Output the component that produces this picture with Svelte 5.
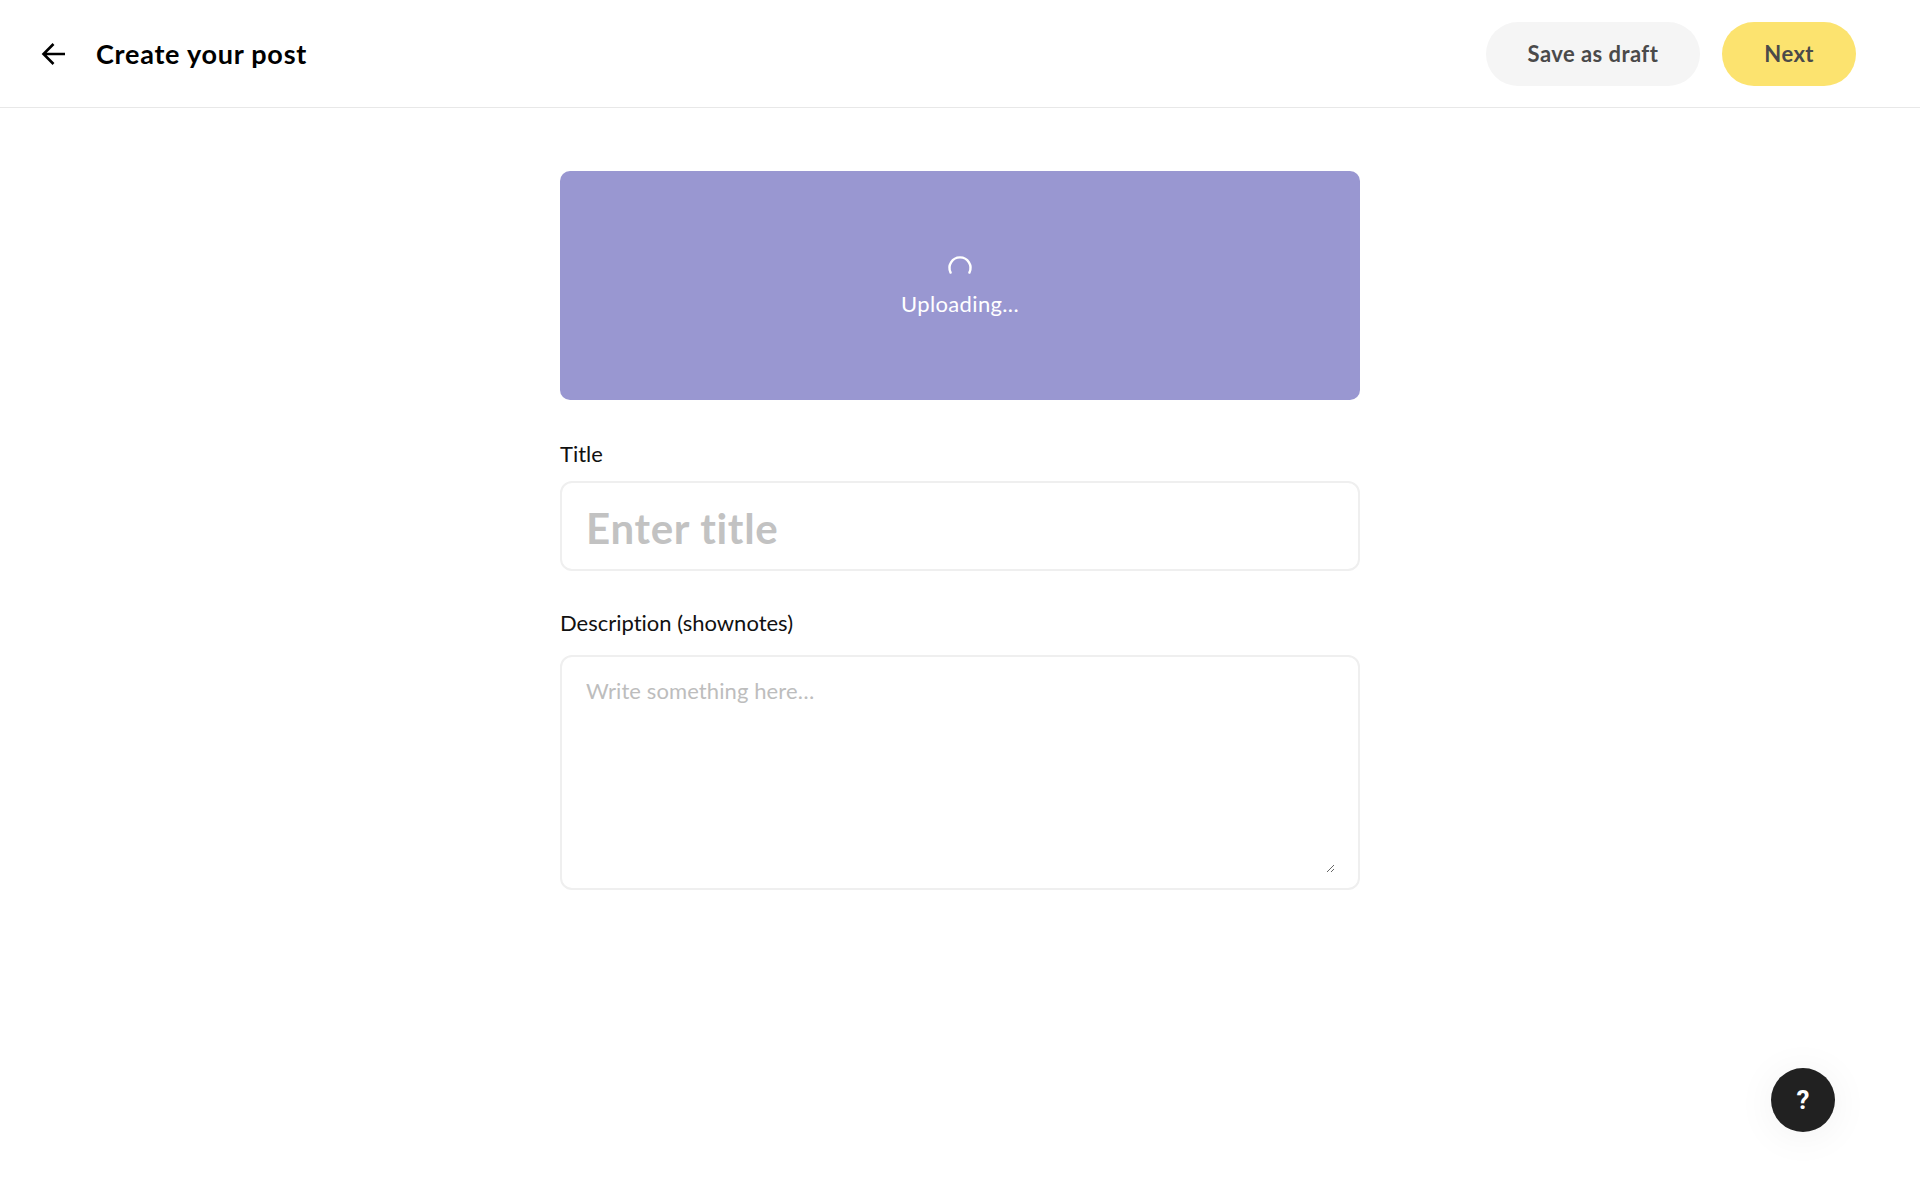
<script>
  let title = $state("");
  let description = $state("");
</script>

<div class="page">
  <header class="topbar">
    <div class="topbar-left">
      <button class="back" aria-label="Back">
        <svg width="28" height="28" viewBox="0 0 28 28" fill="none" stroke="#000" stroke-width="2.6">
          <path d="M25 14H4M13.5 4L3.5 14l10 10" />
        </svg>
      </button>
      <h1>Create your post</h1>
    </div>
    <div class="actions">
      <button class="pill draft">Save as draft</button>
      <button class="pill next">Next</button>
    </div>
  </header>

  <main class="form">
    <div class="upload">
      <svg width="28" height="28" viewBox="0 0 28 28" fill="none" stroke="#fff" stroke-width="2.4" stroke-linecap="round">
        <path d="M4.6 18.6A10.5 10.5 0 1 1 23.4 18.6" />
      </svg>
      <span>Uploading...</span>
    </div>

    <label class="field-label" for="title">Title</label>
    <input id="title" class="title-input" placeholder="Enter title" bind:value={title} />

    <label class="field-label desc-label" for="desc">Description (shownotes)</label>
    <div class="desc-box">
      <textarea id="desc" placeholder="Write something here…" bind:value={description}></textarea>
    </div>
  </main>

  <button class="help" aria-label="Help">?</button>
</div>

<style>
  :global(body) {
    margin: 0;
    background: #fff;
    font-family: Lato, "Open Sans", sans-serif;
    font-variant-ligatures: none;
  }
  .page {
    height: 1200px;
    position: relative;
    overflow: hidden;
  }
  .topbar {
    height: 107px;
    border-bottom: 1px solid #e8e8e8;
    display: flex;
    align-items: center;
    justify-content: space-between;
    padding: 0 64px 0 40px;
  }
  .topbar-left {
    display: flex;
    align-items: center;
    gap: 28px;
  }
  .back {
    border: none;
    background: none;
    padding: 0;
    display: flex;
  }
  h1 {
    margin: 0;
    font-size: 27px;
    font-weight: 700;
    letter-spacing: 0.75px;
    color: #000;
  }
  .actions {
    display: flex;
    gap: 22px;
  }
  .pill {
    height: 64px;
    border: none;
    border-radius: 32px;
    padding: 0 42px;
    font-family: inherit;
    font-size: 22px;
    font-weight: 700;
    letter-spacing: 0.45px;
    color: #4a4a4a;
  }
  .draft {
    background: #f5f5f5;
  }
  .next {
    background: #fce36f;
  }
  .form {
    width: 800px;
    margin: 63px auto 0;
    display: flex;
    flex-direction: column;
  }
  .upload {
    height: 229px;
    background: #9997d1;
    border-radius: 10px;
    display: flex;
    flex-direction: column;
    align-items: center;
    justify-content: center;
    gap: 8px;
    color: #fff;
    font-size: 22px;
    letter-spacing: 0.35px;
    box-sizing: border-box;
  }
  .field-label {
    font-size: 22px;
    color: #111;
    line-height: 28px;
    margin: 40px 0 13px;
    font-feature-settings: "liga" 0;
  }
  .desc-label {
    margin: 38px 0 18px;
  }
  .title-input {
    height: 90px;
    box-sizing: border-box;
    border: 2px solid #efefef;
    border-radius: 12px;
    padding: 4px 24px 0;
    font-family: inherit;
    font-size: 42px;
    font-weight: 700;
    letter-spacing: 0.7px;
    outline: none;
  }
  .title-input::placeholder {
    color: #c2c2c2;
  }
  .desc-box {
    height: 235px;
    box-sizing: border-box;
    border: 2px solid #efefef;
    border-radius: 12px;
    padding: 20px 23px 15px 24px;
    display: flex;
  }
  textarea {
    flex: 1;
    border: none;
    outline: none;
    padding: 0;
    resize: vertical;
    font-family: inherit;
    font-size: 22px;
    letter-spacing: 0.1px;
  }
  textarea::placeholder {
    color: #bdbdbd;
  }
  .help {
    position: absolute;
    left: 1771px;
    top: 1068px;
    width: 64px;
    height: 64px;
    border: none;
    border-radius: 50%;
    background: #212121;
    color: #fff;
    font-family: Roboto, sans-serif;
    font-size: 26px;
    font-weight: 700;
    box-shadow: 0 4px 40px rgba(0, 0, 0, 0.06);
  }
</style>
